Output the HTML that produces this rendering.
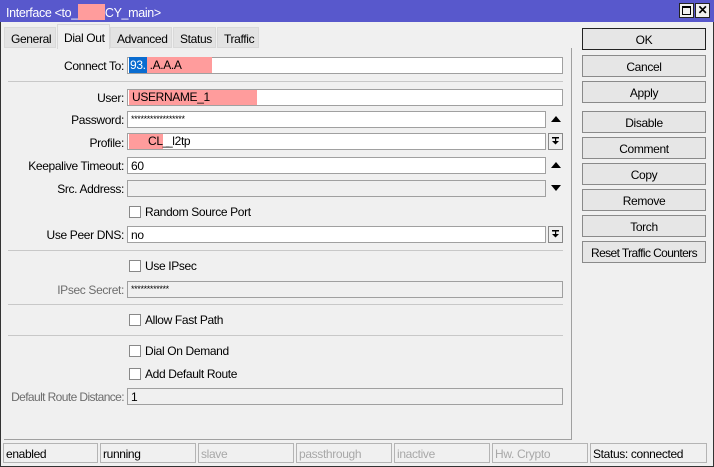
<!DOCTYPE html><html><head><style>
*{box-sizing:border-box;margin:0;padding:0}
body{width:714px;height:467px;background:#f0f0f0;font-family:"Liberation Sans",sans-serif;font-size:12px;letter-spacing:-0.35px;color:#000;position:relative;overflow:hidden}
.a{position:absolute;white-space:nowrap}
.title{left:0;top:0;width:714px;height:22px;background:#5858cc;color:#fff;padding:4px 0 0 6px;font-size:12.5px}
.wb{top:3px;width:15px;height:15px;border:1px solid #222;background:#f0f0f0}
.tab{top:27px;height:21px;border:1px solid #d9d9d9;background:#e3e3e3;padding:4px 0 0 6px;font-size:12px}
.lbl{left:0;width:124px;text-align:right;font-size:12px}
.f{left:127px;width:436px;height:17px;border:1px solid #a0a0a0;background:#fff;padding:1px 3px 0;font-size:12px;line-height:15px}
.g{background:#f0f0f0}
.sep{left:8px;width:555px;height:1px;background:#c8c8c8}
.cb{left:129px;width:12px;height:12px;border:1px solid #888;background:#fff}
.cl{left:145px}
.btn{left:582px;width:124px;height:22px;border:1px solid #8a8a8a;background:#e6e6e6;text-align:center;padding-top:4px}
.st{top:443px;height:20px;border:1px solid #b4b4b4;padding:3px 2px;font-size:12px}
.dis{color:#a8a8a8}
.hl{background:#ff9c9c}
.dd{left:548px;width:15px;height:17px;border:1px solid #888;background:#f0f0f0}
</style></head><body>
<div class="a" style="left:0;top:0;width:714px;height:467px;border:1px solid #333"></div>
<div class="a title">Interface &lt;to_<span class="hl" style="display:inline-block;width:27px;height:16px;vertical-align:-3px"></span>CY_main&gt;</div>
<div class="a wb" style="left:679px"><div class="a" style="left:2px;top:2px;width:9px;height:9px;border:1px solid #000;border-top-width:2px"></div></div>
<div class="a wb" style="left:695px;font-weight:bold;font-size:12px;text-align:center;line-height:13px">✕</div>
<div class="a" style="left:4px;top:48px;width:568px;height:392px;border-right:1px solid #a0a0a0;border-bottom:1px solid #a0a0a0"></div>
<div class="a tab" style="left:4px;width:52px">General</div>
<div class="a tab" style="left:57px;top:24px;height:25px;width:53px;background:#f0f0f0;border-bottom:none;padding-top:6px">Dial Out</div>
<div class="a tab" style="left:110px;width:62px">Advanced</div>
<div class="a tab" style="left:173px;width:43px">Status</div>
<div class="a tab" style="left:217px;width:42px">Traffic</div>

<div class="a lbl" style="top:59px">Connect To:</div>
<div class="a f" style="top:57px;padding:0 1px"><span style="background:#0a6cd0;color:#fff;padding:1px 1px">93.</span><span class="hl" style="padding:1px 30px 1px 3px">.A.A.A</span></div>
<div class="a sep" style="top:81px"></div>
<div class="a lbl" style="top:91px">User:</div>
<div class="a f" style="top:89px;padding:0 1px"><span class="hl" style="display:inline-block;width:128px;height:15px;padding:0 3px">USERNAME_1</span></div>
<div class="a lbl" style="top:113px">Password:</div>
<div class="a f" style="top:111px;width:419px;font-size:9px;line-height:12px">*****************</div>
<div class="a" style="left:551px;top:116px;border:5px solid transparent;border-bottom:6px solid #000;border-top:0"></div>
<div class="a lbl" style="top:136px">Profile:</div>
<div class="a f" style="top:133px;width:419px;padding:0 1px"><span class="hl" style="display:inline-block;width:34px;height:15px;padding:0 0 0 19px">CL_</span> _l2tp</div>
<div class="a dd" style="top:133px"><svg class="a" style="left:3px;top:3px" width="8" height="9"><rect x="0" y="0" width="7" height="1.5"/><rect x="3" y="1" width="1.2" height="4"/><path d="M0 4h7l-3.5 3.5z"/></svg></div>
<div class="a lbl" style="top:159px">Keepalive Timeout:</div>
<div class="a f" style="top:157px;width:419px">60</div>
<div class="a" style="left:551px;top:162px;border:5px solid transparent;border-bottom:6px solid #000;border-top:0"></div>
<div class="a lbl" style="top:182px">Src. Address:</div>
<div class="a f g" style="top:180px;width:419px"></div>
<div class="a" style="left:551px;top:185px;border:5px solid transparent;border-top:6px solid #000;border-bottom:0"></div>
<div class="a cb" style="top:206px"></div><div class="a cl" style="top:205px">Random Source Port</div>
<div class="a lbl" style="top:228px">Use Peer DNS:</div>
<div class="a f" style="top:226px;width:419px">no</div>
<div class="a dd" style="top:226px"><svg class="a" style="left:3px;top:3px" width="8" height="9"><rect x="0" y="0" width="7" height="1.5"/><rect x="3" y="1" width="1.2" height="4"/><path d="M0 4h7l-3.5 3.5z"/></svg></div>
<div class="a sep" style="top:250px"></div>
<div class="a cb" style="top:260px"></div><div class="a cl" style="top:259px">Use IPsec</div>
<div class="a lbl" style="top:283px;color:#6d6d6d">IPsec Secret:</div>
<div class="a f g" style="top:281px;font-size:9px;line-height:12px">************</div>
<div class="a sep" style="top:304px"></div>
<div class="a cb" style="top:314px"></div><div class="a cl" style="top:313px">Allow Fast Path</div>
<div class="a sep" style="top:335px"></div>
<div class="a cb" style="top:345px"></div><div class="a cl" style="top:344px">Dial On Demand</div>
<div class="a cb" style="top:368px"></div><div class="a cl" style="top:367px">Add Default Route</div>
<div class="a lbl" style="top:390px;color:#6d6d6d;letter-spacing:-0.6px">Default Route Distance:</div>
<div class="a f g" style="top:388px">1</div>

<div class="a btn" style="top:28px;border:1px solid #222">OK</div>
<div class="a btn" style="top:55px">Cancel</div>
<div class="a btn" style="top:81px">Apply</div>
<div class="a btn" style="top:111px">Disable</div>
<div class="a btn" style="top:137px">Comment</div>
<div class="a btn" style="top:163px">Copy</div>
<div class="a btn" style="top:189px">Remove</div>
<div class="a btn" style="top:215px">Torch</div>
<div class="a btn" style="top:241px;letter-spacing:-0.6px">Reset Traffic Counters</div>

<div class="a st" style="left:3px;width:95px">enabled</div>
<div class="a st" style="left:100px;width:96px">running</div>
<div class="a st dis" style="left:198px;width:96px">slave</div>
<div class="a st dis" style="left:296px;width:96px">passthrough</div>
<div class="a st dis" style="left:394px;width:96px">inactive</div>
<div class="a st dis" style="left:492px;width:96px">Hw. Crypto</div>
<div class="a st" style="left:590px;width:117px">Status: connected</div>
</body></html>
